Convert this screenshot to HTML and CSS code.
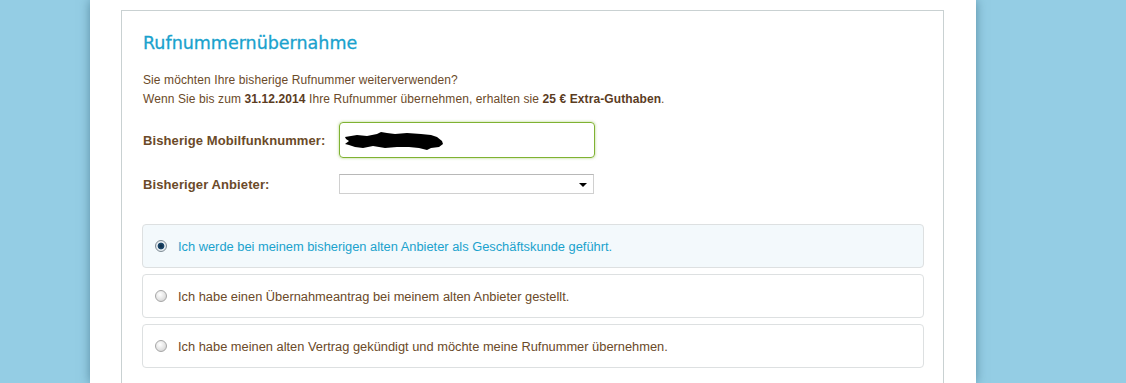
FILE: index.html
```html
<!DOCTYPE html>
<html lang="de">
  <head>
    <meta charset="UTF-8" />
    <title>Rufnummernübernahme</title>
    <link rel="stylesheet" href="styles.css">
  </head>
  <body>
    <div class="page">
      <div class="panel">
        <h2>Rufnummernübernahme</h2>
        <p class="intro">
          Sie möchten Ihre bisherige Rufnummer weiterverwenden?<br />
          Wenn Sie bis zum <b>31.12.2014</b> Ihre Rufnummer übernehmen, erhalten sie <b>25 € Extra-Guthaben</b>.
        </p>
        <div class="row">
          <label class="field-label">Bisherige Mobilfunknummer:</label>
          <div class="text-input">
            <svg width="104" height="24" viewBox="0 0 104 24">
              <path d="M2 9 L8 8 L14 7 L24 8 L34 6 L38 4 L44 5 L52 6 L64 5 L78 6 L88 7 L94 9 L99 13 L100 16 L96 19 L88 20 L84 22 L76 20 L66 19 L54 19 L42 20 L30 18 L20 20 L12 19 L6 17 L2 16 L6 13 L3 11 Z" fill="#000" />
            </svg>
          </div>
        </div>
        <div class="row">
          <label class="field-label">Bisheriger Anbieter:</label>
          <div class="select-input">
            <span class="arrow"></span>
          </div>
        </div>
        <div class="options">
          <div class="option selected">
            <span class="radio checked"></span>
            <span>Ich werde bei meinem bisherigen alten Anbieter als Geschäftskunde geführt.</span>
          </div>
          <div class="option">
            <span class="radio"></span>
            <span>Ich habe einen Übernahmeantrag bei meinem alten Anbieter gestellt.</span>
          </div>
          <div class="option">
            <span class="radio"></span>
            <span>Ich habe meinen alten Vertrag gekündigt und möchte meine Rufnummer übernehmen.</span>
          </div>
        </div>
      </div>
    </div>
  </body>
</html>
```

FILE: styles.css
```css
html,
body {
  height: 100%;
}

body {
  margin: 0;
  background-color: #94cde4;
  font-family: "Liberation Sans", Arial, sans-serif;
  font-size: 12px;
  color: #6b4a29;
  overflow: hidden;
}

.page {
  width: 886px;
  height: 100%;
  margin-left: 90px;
  padding-top: 10px;
  box-sizing: border-box;
  background-color: #fff;
  box-shadow: 0 0 10px rgba(40, 90, 110, 0.55);
}

.panel {
  width: 823px;
  height: 100%;
  margin-left: 31px;
  box-sizing: border-box;
  border: 1px solid #c9d1d2;
  border-bottom: none;
  padding: 22px 20px 0 21px;
}

h2 {
  margin: 0 0 18px 0;
  font-family: "DejaVu Sans", Verdana, sans-serif;
  font-size: 17.5px;
  font-weight: normal;
  color: #1aa2cd;
  -webkit-text-stroke: 0.3px #1aa2cd;
}

.intro {
  margin: 0 0 13px 0;
  line-height: 19px;
  letter-spacing: 0.1px;
}

.intro b {
  color: #5b3c1f;
}

.row {
  display: flex;
  align-items: center;
  margin-bottom: 16px;
}

.field-label {
  width: 196px;
  font-size: 13px;
  font-weight: bold;
  letter-spacing: 0.1px;
}

.text-input {
  width: 256px;
  height: 36px;
  box-sizing: border-box;
  border: 1px solid #7fb232;
  border-radius: 4px;
  box-shadow: 0 0 3px rgba(127, 178, 50, 0.6);
  display: flex;
  align-items: center;
  padding-left: 3px;
}

.select-input {
  width: 255px;
  height: 20px;
  box-sizing: border-box;
  border: 1px solid #d0d0d0;
  border-top-color: #b8b8b8;
  position: relative;
}

.arrow {
  position: absolute;
  right: 6px;
  top: 8px;
  border-left: 4px solid transparent;
  border-right: 4px solid transparent;
  border-top: 4px solid #000;
}

.options {
  margin-top: 30px;
  display: flex;
  flex-direction: column;
  gap: 6px;
}

.option {
  height: 44px;
  box-sizing: border-box;
  border: 1px solid #dde0e1;
  border-radius: 4px;
  display: flex;
  align-items: center;
  padding-left: 12px;
  margin: 0 -1px;
  gap: 11px;
  font-size: 12.85px;
}

.option.selected {
  background-color: #f3f9fc;
  color: #1aa2cd;
}

.radio {
  width: 12px;
  height: 12px;
  border-radius: 50%;
  border: 1px solid #a6a6a6;
  background: radial-gradient(circle at 40% 35%, #fff 0%, #e2e2e2 60%, #c8c8c8 100%);
  box-sizing: border-box;
}

.radio.checked {
  border-color: #7f8c95;
  background: radial-gradient(circle at 50% 50%, #0a2740 0%, #1f4d72 45%, #e8eef2 52%, #d4dbe0 100%);
}
```
